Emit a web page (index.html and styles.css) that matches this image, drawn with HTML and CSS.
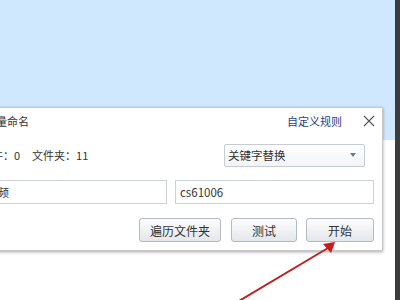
FILE: index.html
```html
<!DOCTYPE html>
<html>
<head>
<meta charset="utf-8">
<link rel="stylesheet" href="styles.css">
</head>
<body>
<div class="screen">
  <div class="desktop">
    <div class="bluewin"></div>
    <div class="dialog">
      <div class="title-row">
        <span class="title">批量命名</span>
        <span class="link">自定义规则</span>
        <svg class="close" width="12" height="12" viewBox="0 0 12 12"><path d="M1 1L11 11M11 1L1 11" stroke="#555" stroke-width="1.1" fill="none"/></svg>
      </div>
      <div class="stats-row">
        <span class="stat">文件：0</span>
        <span class="stat">文件夹：11</span>
        <div class="select"><span>关键字替换</span><span class="caret"></span></div>
      </div>
      <div class="inputs">
        <div class="input wide">视频</div>
        <div class="input narrow">cs61006</div>
      </div>
      <div class="buttons">
        <div class="btn b1">遍历文件夹</div>
        <div class="btn b2">测试</div>
        <div class="btn b3">开始</div>
      </div>
    </div>
  </div>
  <div class="strip"></div>
  <svg class="arrow" width="400" height="300" viewBox="0 0 400 300">
    <line x1="239" y1="301" x2="328" y2="248" stroke="#b82424" stroke-width="2"/>
    <polygon points="335,242 323,244 331,253" fill="#d01818"/>
  </svg>
</div>
</body>
</html>
```
FILE: styles.css
```css
html, body {
  margin: 0;
  padding: 0;
}
body {
  font-family: "Noto Sans CJK SC", "Noto Sans", sans-serif;
  font-size: 11px;
  color: #333;
}
.screen {
  position: relative;
  display: flex;
  width: 400px;
  height: 300px;
  overflow: hidden;
  background: #fff;
}
.desktop {
  position: relative;
  flex: 1;
  background: #fff;
}
.bluewin {
  height: 140px;
  background: #d0e8fd;
}
.strip {
  width: 5px;
  background: #3c3c3c;
}
.dialog {
  position: absolute;
  left: -32px;
  top: 107px;
  width: 415px;
  height: 144px;
  box-sizing: border-box;
  background: #fff;
  border: 1px solid #c9c9c9;
  box-shadow: 0 1px 3px rgba(0,0,0,0.35);
  padding: 0 8px 0 12px;
}
.title-row {
  display: flex;
  align-items: center;
  height: 25px;
}
.title {
  margin-left: 4px;
  flex: 1;
}
.link {
  color: #27408e;
}
.close {
  margin-left: 21px;
  margin-right: -1px;
}
.stats-row {
  display: flex;
  align-items: center;
  height: 44px;
}
.stat + .stat {
  margin-left: 12px;
}
.select {
  margin-left: auto;
  margin-right: 9px;
  width: 141px;
  height: 23px;
  box-sizing: border-box;
  border: 1px solid #c6ccd3;
  border-radius: 2px;
  background: linear-gradient(#ffffff, #f2f4f6);
  display: flex;
  align-items: center;
  justify-content: space-between;
  padding: 0 8px 0 3px;
  font-size: 11.5px;
}
.caret {
  width: 0;
  height: 0;
  border-left: 3.5px solid transparent;
  border-right: 3.5px solid transparent;
  border-top: 4px solid #6d7a8a;
}
.inputs {
  display: flex;
  gap: 8px;
  margin-top: 3px;
}
.input {
  height: 24px;
  box-sizing: border-box;
  border: 1px solid #cdd2d8;
  display: flex;
  align-items: center;
  padding: 0 4px;
  font-size: 11.5px;
}
.wide {
  flex: 1;
}
.narrow {
  width: 199px;
}
.buttons {
  display: flex;
  justify-content: flex-end;
  margin-top: 14px;
}
.btn {
  height: 24px;
  box-sizing: border-box;
  border: 1px solid #b3b9c0;
  border-radius: 3px;
  background: linear-gradient(#fdfdfd, #e3e7eb);
  display: flex;
  align-items: center;
  justify-content: center;
  font-size: 12px;
}
.b1 { width: 82px; }
.b2 { width: 66px; margin-left: 10px; }
.b3 { width: 68px; margin-left: 9px; }
.arrow {
  position: absolute;
  left: 0;
  top: 0;
}
```
